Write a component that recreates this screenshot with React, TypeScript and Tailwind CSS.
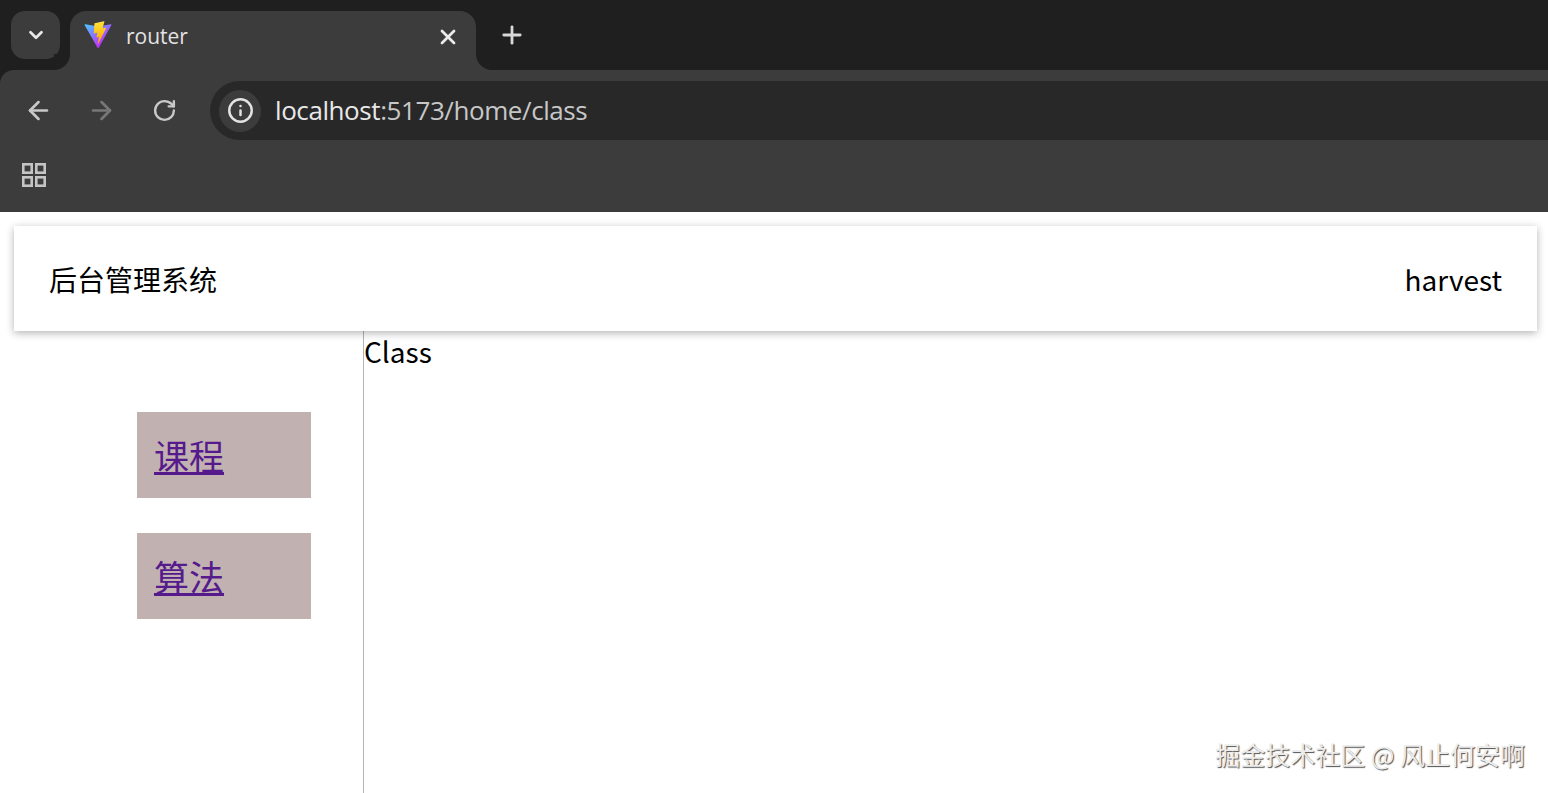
import { ArrowLeft, ArrowRight, ChevronDown, Info, Plus, RotateCw, X } from "lucide-react";

const MENU = ["课程", "算法"];

function ViteLogo() {
  return (
    <svg width="28" height="28" viewBox="0 0 410 404" fill="none" className="mt-[-5px]">
      <path
        d="M399.641 59.5246L215.643 388.545C211.844 395.338 202.084 395.378 198.228 388.618L10.5817 59.5563C6.38087 52.1896 12.6802 43.2665 21.0281 44.7586L205.223 77.6824C206.398 77.8924 207.601 77.8904 208.776 77.6763L389.119 44.8058C397.439 43.2894 403.768 52.1434 399.641 59.5246Z"
        fill="url(#viteA)"
      />
      <path
        d="M292.965 1.5744L156.801 28.2552C154.563 28.6937 152.906 30.5903 152.771 32.8664L144.395 174.33C144.198 177.662 147.258 180.248 150.51 179.498L188.42 170.749C191.967 169.931 195.172 173.055 194.443 176.622L183.18 231.775C182.422 235.487 185.907 238.661 189.532 237.56L212.947 230.446C216.577 229.344 220.065 232.527 219.297 236.242L201.398 322.875C200.278 328.294 207.486 331.249 210.492 326.603L212.5 323.5L323.454 102.072C325.312 98.3645 322.108 94.137 318.036 94.9228L279.014 102.454C275.347 103.161 272.227 99.746 273.262 96.1583L298.731 7.86689C299.767 4.27314 296.636 0.855181 292.965 1.5744Z"
        fill="url(#viteB)"
      />
      <defs>
        <linearGradient id="viteA" x1="6" y1="33" x2="235" y2="344" gradientUnits="userSpaceOnUse">
          <stop stopColor="#41D1FF" />
          <stop offset="1" stopColor="#BD34FE" />
        </linearGradient>
        <linearGradient id="viteB" x1="194.651" y1="8.818" x2="236.076" y2="292.989" gradientUnits="userSpaceOnUse">
          <stop stopColor="#FFEA83" />
          <stop offset="0.083" stopColor="#FFDD35" />
          <stop offset="1" stopColor="#FFA800" />
        </linearGradient>
      </defs>
    </svg>
  );
}

function AppsIcon() {
  return (
    <svg width="26" height="26" viewBox="0 0 26 26" fill="none" stroke="#c4c4c4" strokeWidth="2.6">
      <rect x="2.3" y="2.3" width="8.4" height="8.4" />
      <rect x="15.3" y="2.3" width="8.4" height="8.4" />
      <rect x="2.3" y="15.3" width="8.4" height="8.4" />
      <rect x="15.3" y="15.3" width="8.4" height="8.4" />
    </svg>
  );
}

function BrowserChrome() {
  return (
    <div className="bg-[#1f1f1f] font-['Open_Sans',sans-serif]">
      <div className="flex h-[70px] items-end pl-[11px]">
        <div className="mb-[11px] flex h-[48px] w-[49px] items-center justify-center rounded-[14px] bg-[#3c3c3c]">
          <ChevronDown size={22} strokeWidth={3} className="text-[#e8e8e8]" />
        </div>
        <div className="relative ml-[10px] flex h-[59px] w-[406px] items-center rounded-t-[16px] bg-[#3c3c3c] pb-[7px] pl-[14px] pr-[16px]">
          <div className="absolute bottom-0 left-[-16px] h-4 w-4 bg-[#3c3c3c]">
            <div className="h-full w-full rounded-br-[16px] bg-[#1f1f1f]" />
          </div>
          <div className="absolute bottom-0 right-[-16px] h-4 w-4 bg-[#3c3c3c]">
            <div className="h-full w-full rounded-bl-[16px] bg-[#1f1f1f]" />
          </div>
          <ViteLogo />
          <span className="ml-[14px] mt-[-2px] flex-1 text-[21px] leading-none text-[#e3e3e3]">router</span>
          <X size={24} strokeWidth={2.8} className="text-[#ebebeb]" />
        </div>
        <Plus size={28} strokeWidth={2.4} className="mb-[21px] ml-[22px] text-[#d8d8d8]" />
      </div>
      <div className="h-[142px] rounded-tl-[14px] bg-[#3c3c3c]">
        <div className="flex h-[70px] items-end">
          <div className="flex h-[59px] w-[210px] items-center pl-[24px]">
            <ArrowLeft size={29} strokeWidth={2.2} className="text-[#c8c8c8]" />
            <ArrowRight size={29} strokeWidth={2.2} className="ml-[34px] text-[#777777]" />
            <RotateCw size={25} strokeWidth={2.3} className="ml-[36px] text-[#c8c8c8]" />
          </div>
          <div className="flex h-[59px] flex-1 items-center rounded-l-full bg-[#282828] pl-[9px]">
            <div className="flex h-[42px] w-[42px] items-center justify-center rounded-full bg-[#3c3c3c]">
              <Info size={27} strokeWidth={2.2} className="text-[#e3e3e3]" />
            </div>
            <span className="ml-[14px] mt-[-2px] text-[26px] leading-none tracking-[-0.42px] text-[#c7c7c7]">
              <span className="text-[#e8e8e8]">localhost</span>:5173/home/class
            </span>
          </div>
        </div>
        <div className="pl-[21px] pt-[22px]">
          <AppsIcon />
        </div>
      </div>
    </div>
  );
}

export default function App() {
  return (
    <div className="relative flex h-[793px] flex-col overflow-hidden bg-white font-['Noto_Sans_CJK_SC',sans-serif] text-black">
      <BrowserChrome />

      <div className="relative z-10 mx-[11px] ml-[14px] mt-[14px] flex h-[105px] items-center justify-between bg-white px-[35px] text-[28px] shadow-[0_2px_8px_rgba(0,0,0,0.3)]">
        <span>后台管理系统</span>
        <span>harvest</span>
      </div>

      <div className="flex flex-1">
        <div className="ml-[14px] w-[350px] border-r border-[#b4b4b4] pl-[123px] pt-[81px]">
          <div className="flex flex-col gap-[35px]">
            {MENU.map((item) => (
              <div key={item} className="flex h-[86px] w-[174px] items-center bg-[#c1b1b1] pl-[17px]">
                <a href="#" className="text-[35px] text-[#551a8b] underline">
                  {item}
                </a>
              </div>
            ))}
          </div>
        </div>
        <div className="text-[28px] leading-[40px]">Class</div>
      </div>

      <div className="absolute bottom-[26px] right-[23px] text-[25px] leading-none text-[#ececec] [text-shadow:1px_1px_1px_#4f4f4f]">
        掘金技术社区 @ 风止何安啊
      </div>
    </div>
  );
}
